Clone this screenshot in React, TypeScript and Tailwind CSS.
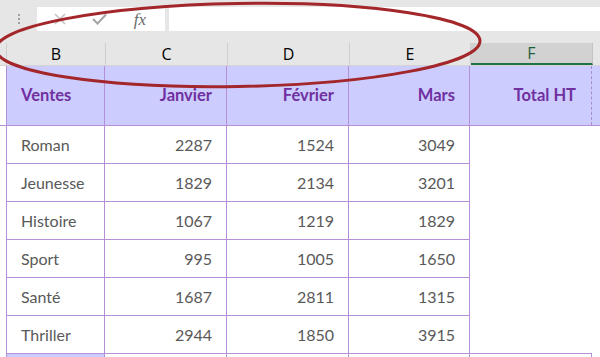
import React from 'react';

type Col = { letter: string; w: string };

const COLS: Col[] = [
  { letter: 'B', w: 'w-[99px]' },
  { letter: 'C', w: 'w-[122px]' },
  { letter: 'D', w: 'w-[122px]' },
  { letter: 'E', w: 'w-[121px]' },
  { letter: 'F', w: 'w-[122px]' },
];

const ROWS: [string, number, number, number][] = [
  ['Roman', 2287, 1524, 3049],
  ['Jeunesse', 1829, 2134, 3201],
  ['Histoire', 1067, 1219, 1829],
  ['Sport', 995, 1005, 1650],
  ['Santé', 1687, 2811, 1315],
  ['Thriller', 2944, 1850, 3915],
];

const font = { fontFamily: 'Lato, "Open Sans", sans-serif' };

export default function App() {
  return (
    <div className="relative w-[600px] h-[357px] overflow-hidden bg-white" style={font}>
      {/* Barre de formule */}
      <div className="h-[43px] bg-[#e6e6e6] flex items-start pt-[7px]">
        <div className="w-[37px] h-[24px] flex items-center justify-center">
          <div className="flex flex-col gap-[2px]">
            <span className="w-[2px] h-[2px] bg-[#a0a0a0]" />
            <span className="w-[2px] h-[2px] bg-[#a0a0a0]" />
            <span className="w-[2px] h-[2px] bg-[#a0a0a0]" />
          </div>
        </div>
        <div className="w-[128px] h-[24px] bg-white flex items-center">
          <div className="w-[46px] flex justify-center">
            <svg width="12" height="12" viewBox="0 0 12 12">
              <path d="M1 1 L11 11 M11 1 L1 11" stroke="#c4c4c4" strokeWidth="1.6" />
            </svg>
          </div>
          <div className="w-[32px] flex justify-center">
            <svg width="15" height="12" viewBox="0 0 15 12">
              <path d="M1 6 L5.5 10.5 L14 1.5" stroke="#a8a8a8" strokeWidth="2.2" fill="none" />
            </svg>
          </div>
          <div className="flex-1 flex justify-center">
            <span
              className="text-[17px] italic text-[#6a6a6a] leading-none"
              style={{ fontFamily: '"Liberation Serif", serif' }}
            >
              fx
            </span>
          </div>
        </div>
        <div className="ml-[4px] flex-1 h-[24px] bg-white" />
      </div>

      {/* En-têtes de colonnes */}
      <div className="flex h-[23px] bg-[#e6e6e6] border-b border-[#d4d4d4]">
        <div className="w-[7px] border-r border-[#cfcfcf]" />
        {COLS.map(c => (
          <div
            key={c.letter}
            className={`${c.w} flex items-center justify-center text-[16px] border-r ${
              c.letter === 'F'
                ? 'bg-[#d2d2d2] text-[#1e5e3c] border-[#c4c4c4] border-b-2 border-b-[#217346]'
                : 'text-black border-[#cfcfcf]'
            }`}
            style={{ fontFamily: '"Open Sans", sans-serif' }}
          >
            {c.letter}
          </div>
        ))}
        <div className="flex-1" />
      </div>

      {/* Ligne de titre */}
      <div className="flex h-[60px] bg-[#ccccff] border-b border-[#b490d8]">
        <div className="w-[7px] bg-white border-r border-[#b490d8]" />
        <div className="w-[98px] border-r border-[#b490d8] flex items-center pl-[14px] text-[16.5px] font-bold text-[#7030a0]">
          Ventes
        </div>
        {['Janvier', 'Février', 'Mars'].map((t, i) => (
          <div
            key={t}
            className={`${i === 2 ? 'w-[121px]' : 'w-[122px]'} border-r border-[#b490d8] flex items-center justify-end pr-[14px] text-[16.5px] font-bold text-[#7030a0]`}
          >
            {t}
          </div>
        ))}
        <div className="w-[122px] border-r border-dashed border-[#a88ccf] flex items-center justify-end pr-[15px] text-[16.5px] font-bold text-[#7030a0]">
          Total HT
        </div>
        <div className="flex-1" />
      </div>

      {/* Données */}
      {ROWS.map(([label, a, b, c]) => (
        <div key={label} className="flex h-[38px]">
          <div className="w-[7px] border-r border-[#b490d8]" />
          <div className="w-[98px] border-r border-b border-[#b490d8] flex items-center pl-[14px] text-[16px] text-[#595959]">
            {label}
          </div>
          {[a, b, c].map((n, i) => (
            <div
              key={i}
              className={`${i === 2 ? 'w-[121px]' : 'w-[122px]'} border-r border-b border-[#b490d8] flex items-center justify-end pr-[14px] text-[16px] text-[#595959]`}
            >
              {n}
            </div>
          ))}
          <div className="flex-1" />
        </div>
      ))}

      {/* Ligne suivante */}
      <div className="flex h-[10px]">
        <div className="w-[7px] border-r border-[#b490d8]" />
        <div className="w-[98px] border-r border-[#b490d8] bg-[#ccccff]" />
        <div className="w-[122px] border-r border-[#b490d8]" />
        <div className="w-[122px] border-r border-[#b490d8]" />
        <div className="w-[121px] border-r border-[#b490d8]" />
        <div className="w-[122px] border-r border-t border-[#b490d8] -mt-px" />
      </div>

      {/* Ellipse rouge */}
      <svg
        className="absolute left-0 top-0 pointer-events-none"
        width="600"
        height="357"
        viewBox="0 0 600 357"
      >
        <ellipse
          cx="238"
          cy="45"
          rx="242"
          ry="41.5"
          transform="rotate(-1 238 45)"
          fill="none"
          stroke="#a3262a"
          strokeWidth="3"
        />
      </svg>
    </div>
  );
}
